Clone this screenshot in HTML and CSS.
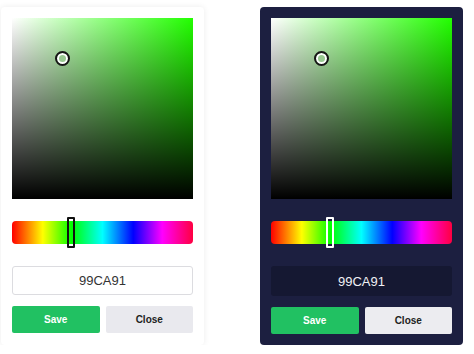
FILE: index.html
```html
<!DOCTYPE html>
<html lang="en">
<head>
    <meta charset="UTF-8">
    <meta name="viewport" content="width=device-width, initial-scale=1.0">
    <title>Color Picker</title>
    <link rel="stylesheet" href="styles.css">
</head>
<body>
    <div class="pickers">
        <div class="picker light">
            <div class="palette">
                <span class="cursor"></span>
            </div>
            <div class="hue">
                <span class="hue-thumb"></span>
            </div>
            <input class="hex" type="text" value="99CA91">
            <div class="actions">
                <button class="btn save">Save</button>
                <button class="btn close">Close</button>
            </div>
        </div>

        <div class="picker dark">
            <div class="palette">
                <span class="cursor"></span>
            </div>
            <div class="hue">
                <span class="hue-thumb"></span>
            </div>
            <input class="hex" type="text" value="99CA91">
            <div class="actions">
                <button class="btn save">Save</button>
                <button class="btn close">Close</button>
            </div>
        </div>
    </div>
</body>
</html>
```

FILE: styles.css
```css
* {
    box-sizing: border-box;
}

body {
    margin: 0;
    background: #ffffff;
    font-family: "Liberation Sans", Arial, sans-serif;
}

.pickers {
    display: flex;
    gap: 56px;
    padding: 7px 0 0 1px;
}

.picker {
    width: 203px;
    padding: 11px;
    display: flex;
    flex-direction: column;
    border-radius: 4px;
}

.light {
    background: #ffffff;
    box-shadow: 0 0 6px rgba(0, 0, 0, 0.08);
}

.dark {
    background: #1c1f40;
}

.palette {
    position: relative;
    height: 181px;
    background: linear-gradient(to top, #000000, rgba(0, 0, 0, 0)), linear-gradient(to right, #ffffff, hsl(112, 100%, 50%));
}

.cursor {
    position: absolute;
    left: 43px;
    top: 33px;
    width: 15px;
    height: 15px;
    border: 2px solid #161616;
    border-radius: 50%;
    background: #99ca91;
    box-shadow: inset 0 0 0 2px #ffffff;
}

.hue {
    position: relative;
    height: 23px;
    margin-top: 22px;
    border-radius: 4px;
    background: linear-gradient(to right, #ff0000 0%, #ffff00 17%, #00ff00 33%, #00ffff 50%, #0000ff 67%, #ff00ff 83%, #ff0040 100%);
}

.hue-thumb {
    position: absolute;
    left: 55px;
    top: -4px;
    width: 8px;
    height: 31px;
    border: 2px solid #111111;
    border-radius: 1px;
}

.dark .hue-thumb {
    border-color: #ffffff;
}

.hex {
    height: 29px;
    margin-top: 22px;
    border: 1px solid #dcdce0;
    border-radius: 3px;
    background: #ffffff;
    color: #333333;
    font-family: "Liberation Sans", Arial, sans-serif;
    font-size: 13px;
    text-align: center;
}

.dark .hex {
    height: 30px;
    border: none;
    background: #151832;
    color: #f0f0f5;
}

.actions {
    display: flex;
    gap: 6px;
    margin-top: 11px;
}

.btn {
    flex: 1;
    height: 27px;
    border: none;
    border-radius: 2px;
    font-family: "Liberation Sans", Arial, sans-serif;
    font-weight: 700;
    font-size: 10px;
}

.save {
    background: #21c162;
    color: #ffffff;
}

.close {
    background: #e9e9ee;
    color: #222222;
}

.dark .close {
    background: #ececf0;
}
```
